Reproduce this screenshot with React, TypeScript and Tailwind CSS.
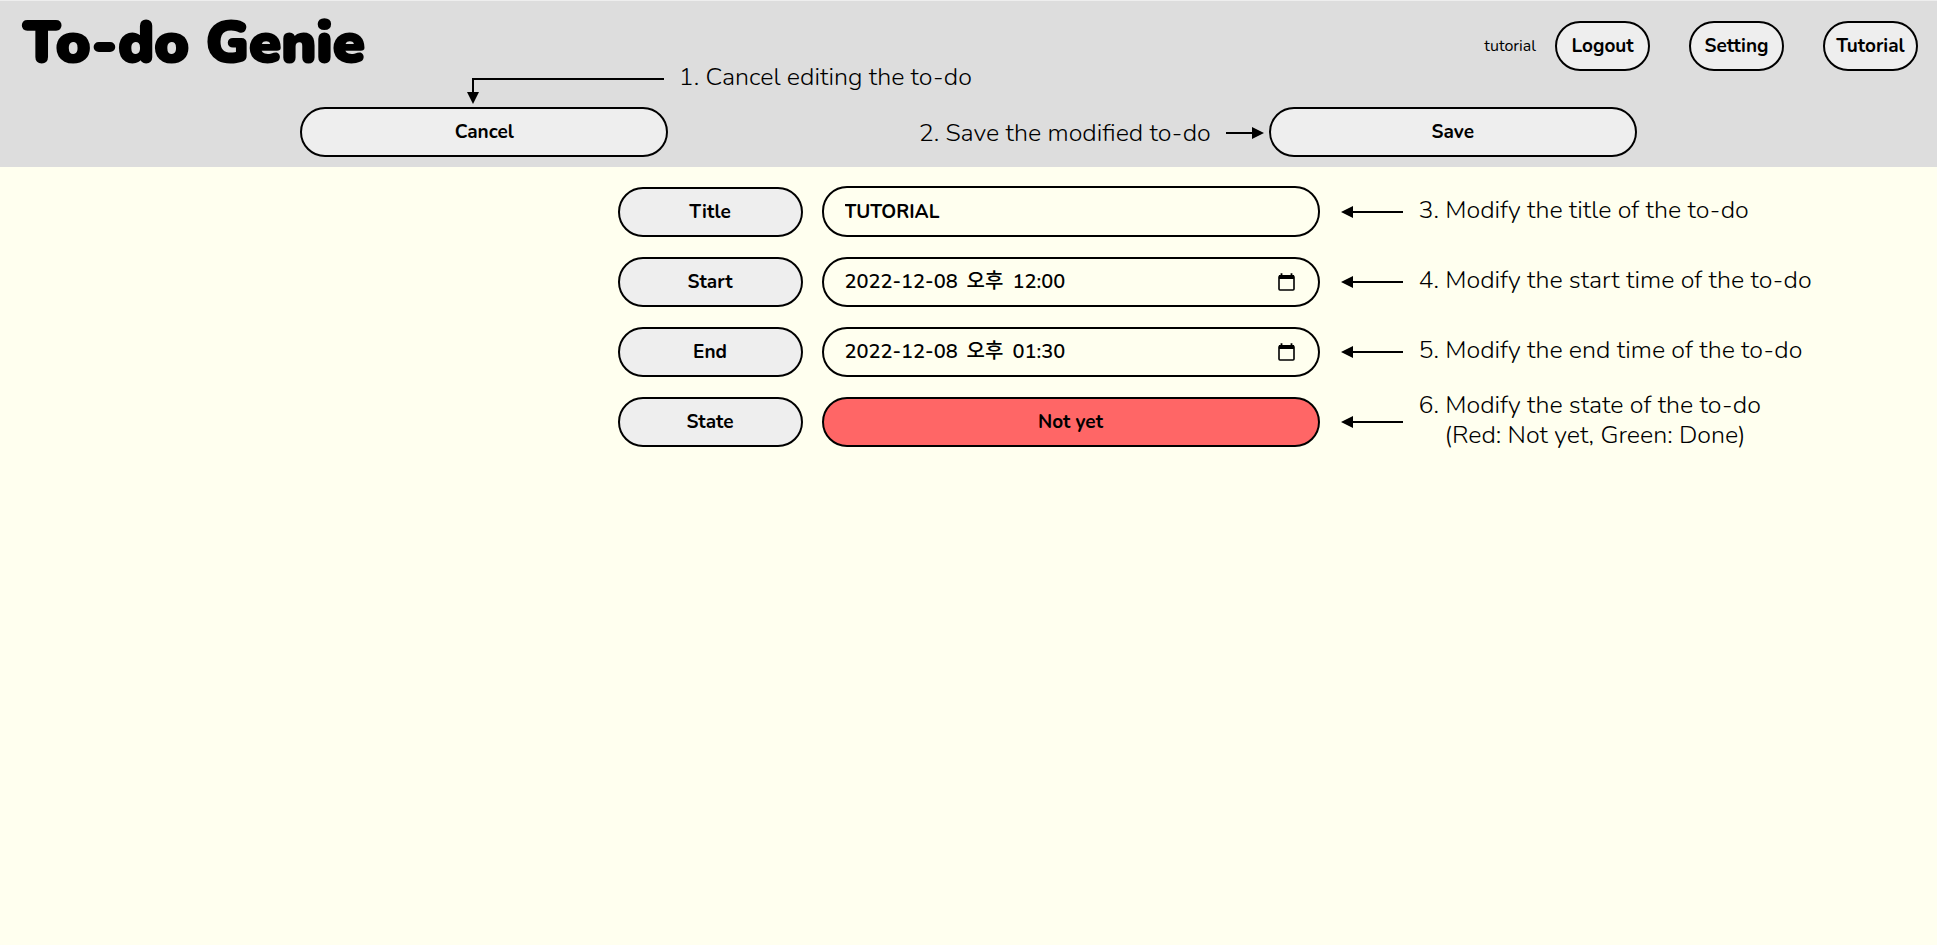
import React, { useState } from "react";

const pill =
  "rounded-[25px] border-2 border-black bg-[#eeeeee] text-center text-[19px] leading-6 font-bold text-black";

const noteText = "text-[25px] leading-[30px] font-light whitespace-nowrap text-black";

function LeftArrow() {
  return (
    <svg width="62" height="12" viewBox="0 0 62 12" className="shrink-0" aria-hidden="true">
      <path d="M0 6 12 0V12Z" fill="#000" />
      <path d="M11 6H62" stroke="#000" strokeWidth="2" />
    </svg>
  );
}

function RightArrow() {
  return (
    <svg width="38" height="12" viewBox="0 0 38 12" className="shrink-0" aria-hidden="true">
      <path d="M38 6 26 0V12Z" fill="#000" />
      <path d="M0 6H27" stroke="#000" strokeWidth="2" />
    </svg>
  );
}

function ElbowArrow() {
  return (
    <svg width="197" height="27" viewBox="0 0 197 27" className="shrink-0" aria-hidden="true">
      <path d="M197 2H6V16" fill="none" stroke="#000" strokeWidth="2" />
      <path d="M6 27 0 15H12Z" fill="#000" />
    </svg>
  );
}

function CalendarIcon() {
  return (
    <svg width="17" height="18" viewBox="0 0 17 18" aria-hidden="true">
      <rect x="1" y="3" width="15" height="14" rx="1" fill="none" stroke="#000" strokeWidth="1.6" />
      <path d="M1 2H16V6H1ZM2.6 0.3H4.4V3H2.6ZM12.6 0.3H14.4V3H12.6Z" fill="#000" />
    </svg>
  );
}

function Row({
  label,
  htmlFor,
  note,
  children,
}: {
  label: string;
  htmlFor: string;
  note: React.ReactNode;
  children: React.ReactNode;
}) {
  return (
    <div className="grid grid-cols-[1fr_702px_1fr] items-center">
      <div />
      <div className="flex items-center gap-[19px]">
        <label htmlFor={htmlFor} className={`${pill} flex h-[50px] w-[185px] items-center justify-center`}>
          {label}
        </label>
        {children}
      </div>
      <div className="flex h-[50px] items-center gap-4 pl-[21px]">
        <LeftArrow />
        <div className={`${noteText} pb-1`}>{note}</div>
      </div>
    </div>
  );
}

const datePart = "bg-transparent text-[20px] leading-6 text-black outline-none";

function DateField({
  id,
  initialDate,
  initialHalf,
  initialTime,
}: {
  id: string;
  initialDate: string;
  initialHalf: string;
  initialTime: string;
}) {
  const [date, setDate] = useState(initialDate);
  const [half, setHalf] = useState(initialHalf);
  const [time, setTime] = useState(initialTime);
  return (
    <div className="flex h-[50px] flex-1 items-center rounded-[25px] border-2 border-black pr-[23px] pl-[21px]">
      <input
        id={id}
        type="text"
        value={date}
        onChange={(e) => setDate(e.target.value)}
        className={`${datePart} w-[122px] font-semibold`}
      />
      <input
        type="text"
        aria-label="AM or PM"
        value={half}
        onChange={(e) => setHalf(e.target.value)}
        className={`${datePart} w-[46px] font-medium`}
      />
      <input
        type="text"
        aria-label="Time"
        value={time}
        onChange={(e) => setTime(e.target.value)}
        className={`${datePart} min-w-0 flex-1 font-semibold`}
      />
      <button type="button" aria-label="Open calendar">
        <CalendarIcon />
      </button>
    </div>
  );
}

export default function App() {
  const [title, setTitle] = useState("TUTORIAL");
  const [done, setDone] = useState(false);

  return (
    <div className="min-h-screen bg-[#ffffef] font-['Nunito','Open_Sans','Noto_Sans_CJK_KR',sans-serif]">
      <header className="border-t border-[#eeeeee] bg-[#dddddd] pb-[10px]">
        <div className="flex h-[90px] items-center justify-between pr-[19px] pl-[23px]">
          <h1 className="pb-[6px] text-[58px] leading-[70px] font-black text-black [-webkit-text-stroke:2px_#000]">
            To-do Genie
          </h1>
          <nav className="flex items-center gap-[39px]">
            <div className="flex items-center gap-[19px]">
              <span className="text-base text-black">tutorial</span>
              <button type="button" className={`${pill} h-[50px] w-[95px]`}>
                Logout
              </button>
            </div>
            <button type="button" className={`${pill} h-[50px] w-[95px]`}>
              Setting
            </button>
            <button type="button" className={`${pill} h-[50px] w-[95px]`}>
              Tutorial
            </button>
          </nav>
        </div>
        <div className="mt-4 grid grid-cols-[1fr_19%_2fr_19%_1fr] items-center">
          <div />
          <div className="relative">
            <button type="button" className={`${pill} h-[50px] w-full`}>
              Cancel
            </button>
            <div className="absolute bottom-full left-[45%] ml-px mb-[3px] flex items-end gap-[15px]">
              <ElbowArrow />
              <p className={`${noteText} mb-3`}>1. Cancel editing the to-do</p>
            </div>
          </div>
          <div className="flex items-center justify-end gap-[15px] pt-[2px] pr-[5px]">
            <p className={noteText}>2. Save the modified to-do</p>
            <RightArrow />
          </div>
          <button type="button" className={`${pill} h-[50px] w-full`}>
            Save
          </button>
        </div>
      </header>

      <main className="flex flex-col gap-5 pt-[19px]">
        <Row label="Title" htmlFor="title" note="3. Modify the title of the to-do">
          <input
            id="title"
            type="text"
            value={title}
            onChange={(e) => setTitle(e.target.value)}
            className="h-[51px] min-w-0 flex-1 rounded-[25px] border-2 border-black bg-transparent px-[21px] text-[19px] leading-6 font-bold text-black outline-none"
          />
        </Row>
        <Row label="Start" htmlFor="start" note="4. Modify the start time of the to-do">
          <DateField id="start" initialDate="2022-12-08" initialHalf="오후" initialTime="12:00" />
        </Row>
        <Row label="End" htmlFor="end" note="5. Modify the end time of the to-do">
          <DateField id="end" initialDate="2022-12-08" initialHalf="오후" initialTime="01:30" />
        </Row>
        <Row
          label="State"
          htmlFor="state"
          note={
            <>
              <p>6. Modify the state of the to-do</p>
              <p className="pl-[26px]">(Red: Not yet, Green: Done)</p>
            </>
          }
        >
          <button
            id="state"
            type="button"
            onClick={() => setDone(!done)}
            className={`h-[50px] flex-1 rounded-[25px] border-2 border-black text-[19px] leading-6 font-bold text-black ${done ? "bg-[#66cc66]" : "bg-[#ff6666]"}`}
          >
            {done ? "Done" : "Not yet"}
          </button>
        </Row>
      </main>
    </div>
  );
}
